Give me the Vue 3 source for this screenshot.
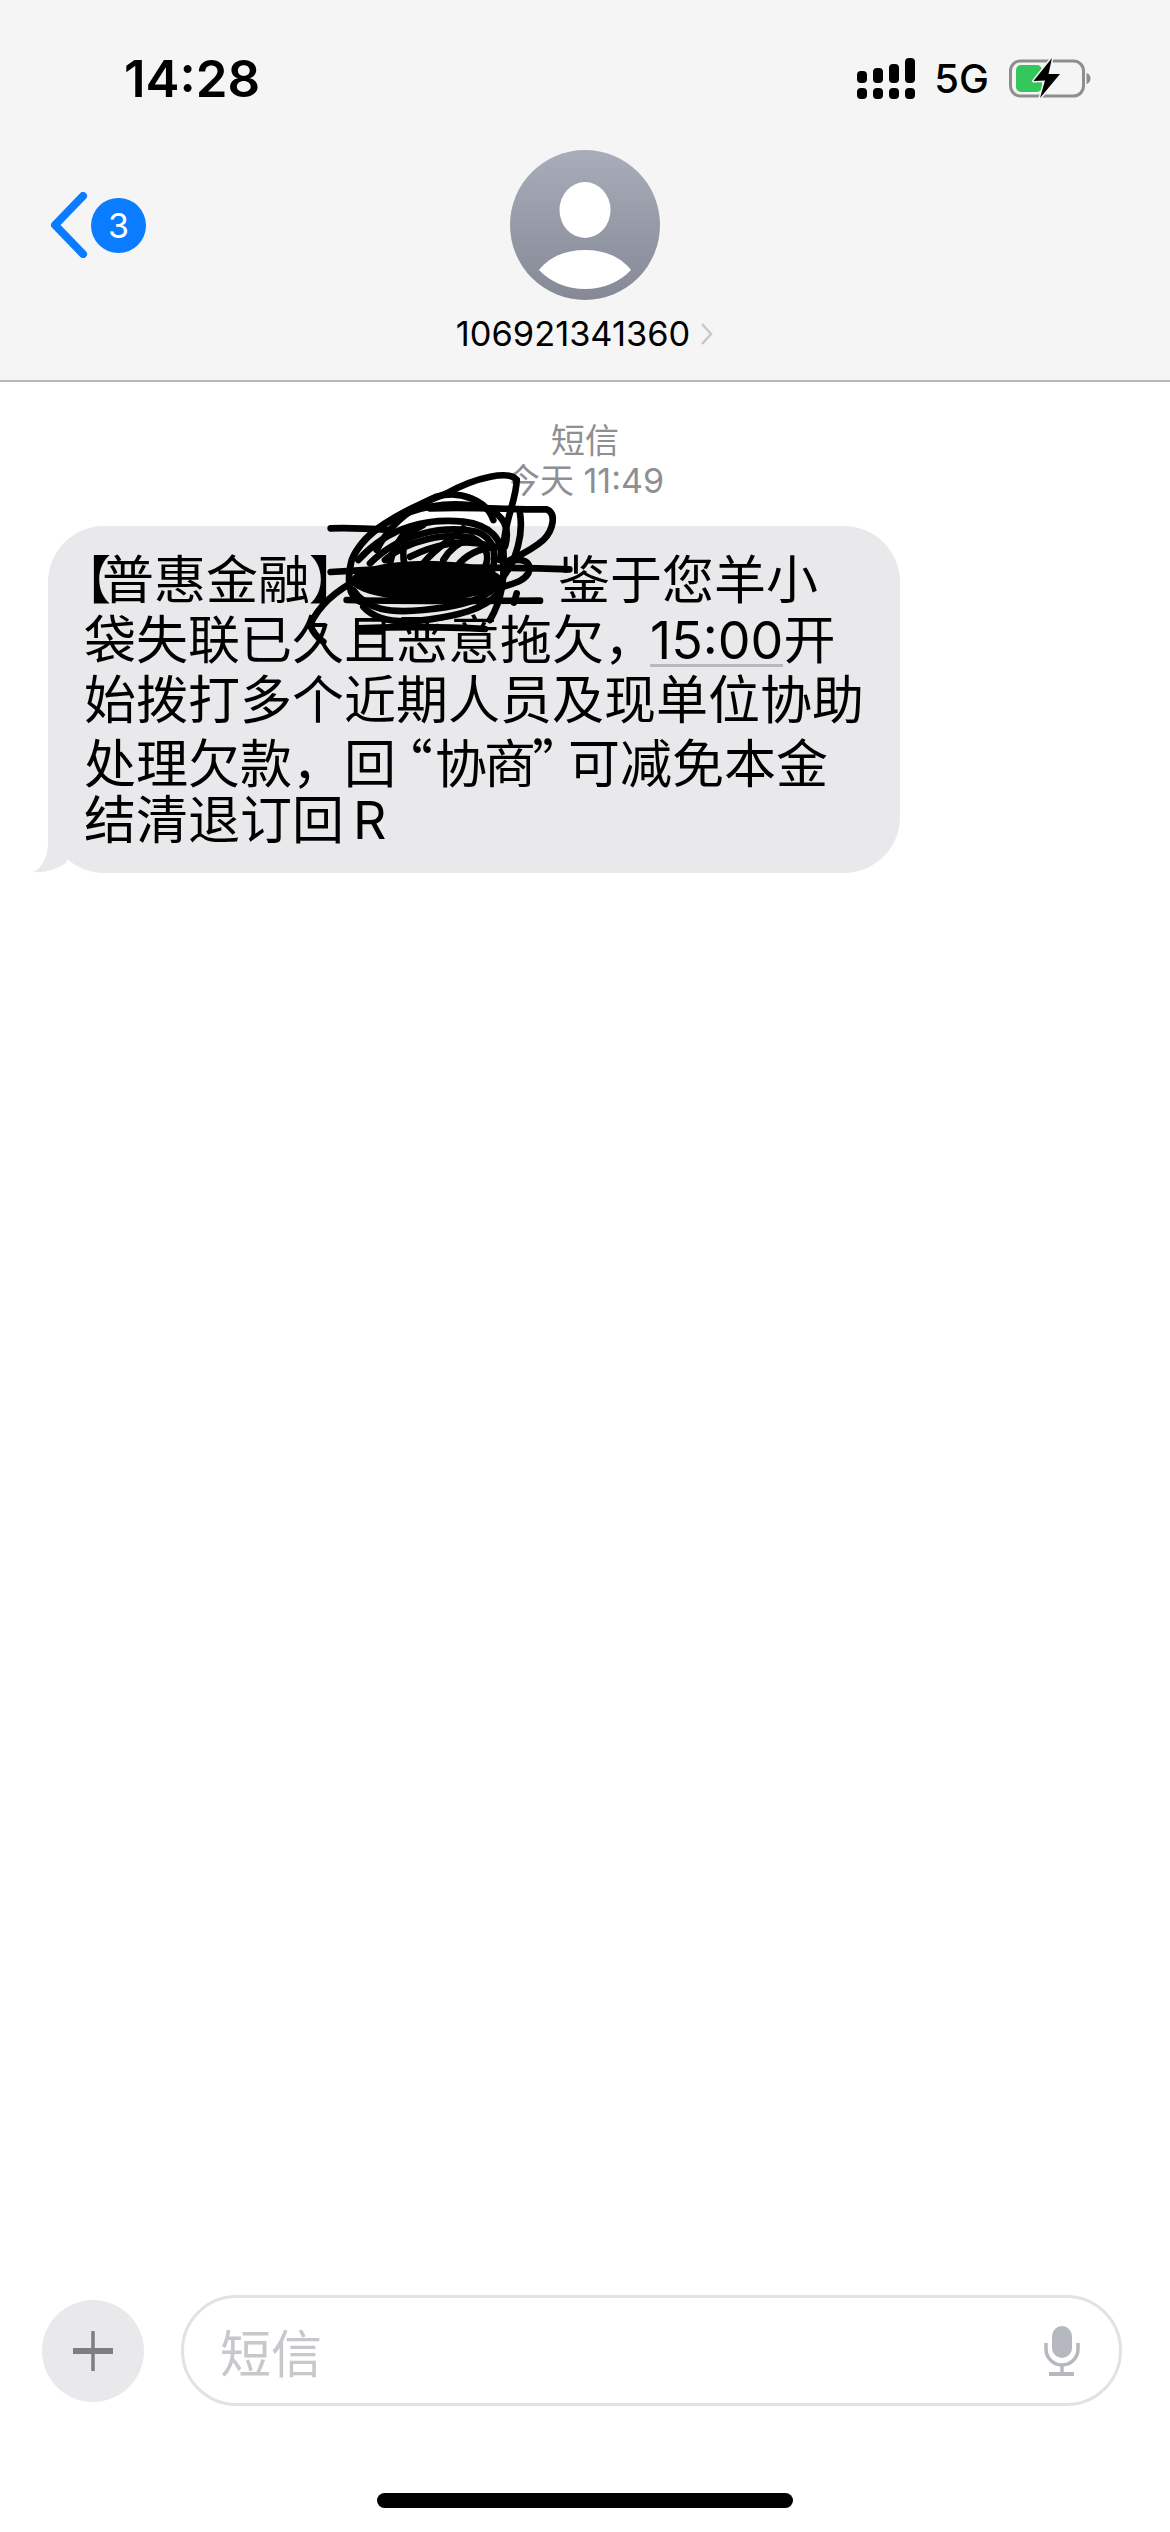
<script setup>
const signalBars = [12, 15, 19, 25]
</script>

<template>
  <div class="screen">
    <header class="header">
      <div class="status-bar">
        <span class="time">14:28</span>
        <div class="status-icons">
          <div class="signal">
            <div v-for="h in signalBars" :key="h" class="signal-col">
              <i :style="{ height: h + 'px' }"></i>
              <i class="dot"></i>
            </div>
          </div>
          <span class="network">5G</span>
          <svg class="battery" width="82" height="42" viewBox="0 0 82 42">
            <rect x="1.500" y="4" width="73" height="35" rx="10" fill="none" stroke="#8e8e8e" stroke-width="3" />
            <rect x="7" y="8" width="26" height="27" rx="5" fill="#34c759" />
            <path d="M77.500 16c2.500 .5 4 2.800 4 5.500s-1.500 5-4 5.500z" fill="#8e8e8e" />
            <path d="M43 1 L24.500 24 L36 23.500 L31 41 L51 17 L39.500 17 Z" fill="#000" stroke="#f5f5f5" stroke-width="3" stroke-linejoin="round" paint-order="stroke" />
          </svg>
        </div>
      </div>
      <div class="nav">
        <div class="back">
          <svg width="38" height="66" viewBox="0 0 38 66">
            <path d="M33 4 L5 33 L33 62" fill="none" stroke="#0a7cff" stroke-width="8" stroke-linecap="round" stroke-linejoin="round" />
          </svg>
          <span class="badge">3</span>
        </div>
        <div class="contact">
          <svg class="avatar" width="150" height="150" viewBox="0 0 150 150">
            <defs>
              <linearGradient id="avatarFill" x1="0" y1="0" x2="0" y2="1">
                <stop offset="0" stop-color="#a9adb9" />
                <stop offset="1" stop-color="#858995" />
              </linearGradient>
            </defs>
            <circle cx="75" cy="75" r="75" fill="url(#avatarFill)" />
            <ellipse cx="75" cy="60" rx="25.500" ry="28" fill="#fff" />
            <path d="M29 120 C40 106 57 100 75 100 C93 100 110 106 121 120 C110 132 93 139 75 139 C57 139 40 132 29 120 Z" fill="#fff" />
          </svg>
          <div class="contact-name">
            <span>106921341360</span>
            <svg width="14" height="24" viewBox="0 0 14 24">
              <path d="M2 2 L11 12 L2 22" fill="none" stroke="#c7c7cc" stroke-width="2.500" />
            </svg>
          </div>
        </div>
        <div></div>
      </div>
    </header>

    <main class="thread">
      <div class="stamp">
        <div>短信</div>
        <div>今天 11:49</div>
      </div>
      <div class="bubble" lang="zh-CN">
        <div class="line"><span class="bracket bracket-open">【</span>普惠金融<span class="bracket bracket-close">】</span>鉴于您羊小</div>
        <div class="line">袋失联已久且恶意拖欠<span class="comma">，</span><span class="time-link">15:00</span>开</div>
        <div class="line">始拨打多个近期人员及现单位协助</div>
        <div class="line">处理欠款，回<span class="quote quote-open">“</span><span class="quoted">协商</span><span class="quote quote-close">”</span>可减免本金</div>
        <div class="line">结清退订回<span class="last-letter">R</span></div>
        <svg class="tail" width="40" height="56" viewBox="0 0 40 56">
          <path d="M16 0 V26 C16 40 10 51 1 55 C12 56 24 53 35 45 L35 0 Z" fill="#e9e9eb" />
        </svg>
        <!-- hand-drawn redaction over the sender name -->
        <svg class="scribble" width="300" height="200" viewBox="0 0 900 600">
          <ellipse cx="410" cy="392" rx="228" ry="60" fill="#000" />
          <g fill="none" stroke="#000" stroke-width="20" stroke-linecap="round" stroke-linejoin="round">
            <path d="M122 235 C180 232 240 236 300 240" />
            <path d="M122 366 C350 350 600 350 838 358" />
            <path d="M170 450 C350 455 560 452 750 452" />
            <path d="M205 535 C330 530 470 530 585 537" />
            <path d="M210 385 C140 420 85 470 60 525 C70 550 85 565 100 575" />
            <path d="M680 90 C660 60 560 80 470 130 C350 175 220 240 185 330 C170 390 175 440 210 455" />
            <path d="M680 90 C680 150 640 220 640 300 C645 390 635 450 600 510" />
            <path d="M420 175 C560 170 680 180 770 178 C800 190 790 240 760 270 C720 305 680 320 640 340" />
            <path d="M610 210 C590 150 510 120 440 140 C370 170 300 220 260 300" />
            <path d="M690 190 C700 250 680 330 640 380" />
            <path d="M190 320 C240 215 400 150 540 165 C630 175 665 220 645 290" />
            <path d="M205 330 C300 225 420 205 520 215 C600 225 645 270 630 330" />
            <path d="M240 340 C330 250 460 225 560 245 C615 265 625 320 600 380" />
            <path d="M285 330 C350 270 470 245 550 265 C590 285 600 320 585 350" />
            <path d="M345 350 C330 290 345 250 400 225" />
            <path d="M360 320 C430 285 520 265 590 285" />
            <path d="M460 330 C480 295 510 275 545 262" />
            <path d="M300 340 C310 290 330 270 350 240" />
            <path d="M500 350 C530 310 570 295 620 290" />
            <path d="M400 340 C430 300 480 270 520 235" />
            <path d="M220 470 C260 515 340 520 420 508 C500 497 580 480 625 430" />
            <path d="M190 420 C230 480 300 490 400 480 C480 472 560 462 620 410" />
            <path d="M640 340 C690 320 730 330 715 370 C700 395 670 400 640 410" />
            <path d="M680 430 L672 458" />
          </g>
        </svg>
      </div>
    </main>

    <footer class="footer">
      <div class="composer">
        <button class="plus">
          <svg width="40" height="40" viewBox="0 0 40 40">
            <path d="M20 1 V39" stroke="#7d7d82" stroke-width="3.500" stroke-linecap="round" />
            <path d="M1 20 H39" stroke="#7d7d82" stroke-width="6" stroke-linecap="round" />
          </svg>
        </button>
        <div class="field">
          <span class="placeholder">短信</span>
          <svg width="36" height="50" viewBox="0 0 36 50">
            <rect x="8" y="0" width="20" height="32" rx="10" fill="#b5b8bf" />
            <path d="M2 17 V23 A16 16 0 0 0 34 23 V17" fill="none" stroke="#b5b8bf" stroke-width="3.500" />
            <path d="M18 39 V47" stroke="#b5b8bf" stroke-width="3.500" />
            <rect x="5" y="46" width="25" height="4" fill="#b5b8bf" />
          </svg>
        </div>
      </div>
      <div class="home-indicator"></div>
    </footer>
  </div>
</template>

<style scoped>
.screen {
  width: 1170px;
  height: 2532px;
  display: flex;
  flex-direction: column;
  background: #fff;
  color: #000;
  overflow: hidden;
  font-family: Inter, "Noto Sans CJK SC", sans-serif;
}
.header {
  background: #f5f5f5;
  border-bottom: 2px solid #b8b8b8;
  height: 382px;
  box-sizing: border-box;
}
.status-bar {
  height: 150px;
  box-sizing: border-box;
  padding: 6px 79px 0 124px;
  display: flex;
  align-items: center;
  justify-content: space-between;
}
.time {
  font-size: 51px;
  font-weight: 600;
}
.status-icons {
  display: flex;
  align-items: center;
}
.signal {
  display: flex;
  gap: 6px;
  margin-right: 19px;
}
.signal-col {
  display: flex;
  flex-direction: column;
  justify-content: flex-end;
  gap: 5px;
  height: 41px;
}
.signal-col i {
  display: block;
  width: 10px;
  background: #000;
  border-radius: 4px;
}
.signal-col .dot {
  height: 11px;
}
.network {
  font-size: 40px;
  font-weight: 500;
  margin-right: 20px;
}
.nav {
  display: grid;
  grid-template-columns: 1fr auto 1fr;
}
.back {
  display: flex;
  align-items: center;
  height: 150px;
  padding-left: 50px;
  gap: 3px;
}
.badge {
  width: 55px;
  height: 55px;
  border-radius: 50%;
  background: #0a7cff;
  color: #fff;
  font-size: 34px;
  display: flex;
  align-items: center;
  justify-content: center;
}
.contact {
  display: flex;
  flex-direction: column;
  align-items: center;
}
.avatar {
  display: block;
}
.contact-name {
  display: flex;
  align-items: center;
  gap: 10px;
  margin-top: 13px;
  font-size: 34.400px;
  line-height: 42px;
  white-space: nowrap;
}
.thread {
  flex: 1;
}
.stamp {
  text-align: center;
  color: #8e8e93;
  font-size: 34px;
  line-height: 40px;
  padding-top: 39px;
  margin-bottom: 25px;
}
.bubble {
  position: relative;
  width: 852px;
  height: 347px;
  box-sizing: border-box;
  margin-left: 48px;
  padding: 25px 0 0 36px;
  background: #e9e9eb;
  border-radius: 56px;
  font-size: 52px;
  line-height: 60px;
}
.line {
  height: 60px;
  white-space: nowrap;
}
.bracket {
  font-feature-settings: "palt";
}
.bracket-open {
  letter-spacing: -8px;
}
.bracket-close {
  margin-right: 222px;
}
.comma {
  letter-spacing: -6px;
}
.time-link {
  display: inline-block;
  line-height: 46px;
  border-bottom: 3px solid #b8b8bd;
}
.quote {
  font-family: "Noto Sans CJK SC", sans-serif;
  font-feature-settings: "palt";
}
.quote-open {
  margin: 0 3px 0 10px;
}
.quoted {
  letter-spacing: -3px;
}
.quote-close {
  margin-right: 9px;
}
.last-letter {
  margin-left: 9px;
}
.tail {
  position: absolute;
  left: -16px;
  bottom: 0;
}
.scribble {
  position: absolute;
  left: 242px;
  top: -76px;
}
.footer {
  display: flex;
  flex-direction: column;
  align-items: center;
  padding-bottom: 24px;
}
.composer {
  display: flex;
  align-items: center;
  align-self: stretch;
  gap: 37px;
  padding: 0 48px 0 42px;
  margin-bottom: 87px;
}
.plus {
  width: 102px;
  height: 102px;
  border: none;
  border-radius: 50%;
  background: #e9e9eb;
  padding: 0;
  display: flex;
  align-items: center;
  justify-content: center;
}
.field {
  flex: 1;
  height: 111px;
  box-sizing: border-box;
  border: 3px solid #e2e2e4;
  border-radius: 56px;
  padding: 0 39px 0 36px;
  display: flex;
  align-items: center;
  justify-content: space-between;
}
.placeholder {
  font-size: 51px;
  color: #c7c7cc;
}
.home-indicator {
  width: 416px;
  height: 15px;
  border-radius: 8px;
  background: #000;
}
</style>

<style>
html, body {
  background: #fff;
}
</style>
